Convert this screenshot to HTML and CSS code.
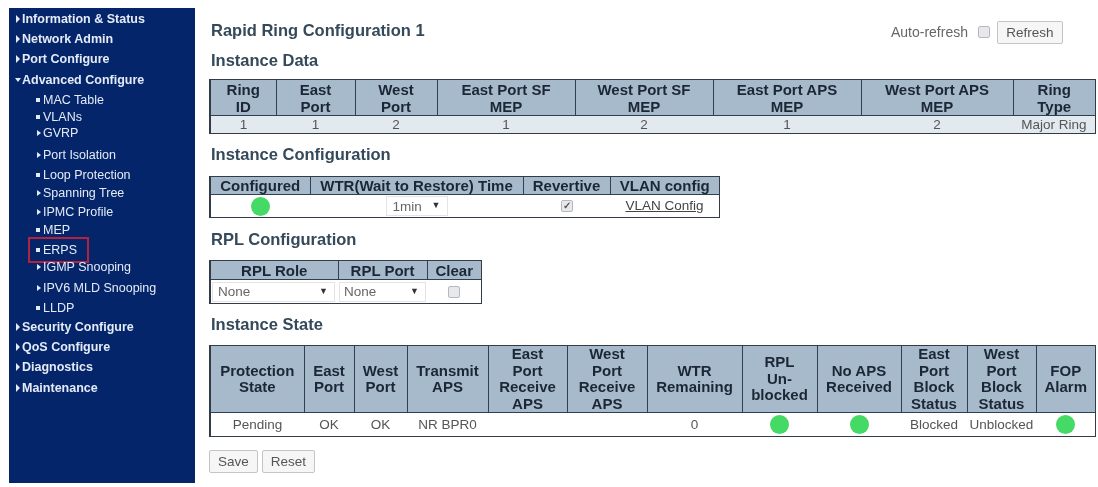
FILE: index.html
```html
<!DOCTYPE html>
<html lang="en">
<head>
<meta charset="utf-8">
<title>Rapid Ring Configuration 1</title>
<link rel="stylesheet" href="styles.css">
</head>
<body>
<div class="page">
  <nav class="sidebar">
    <ul class="menu">
      <li class="top"><i class="arrow"></i>Information &amp; Status</li>
      <li class="top"><i class="arrow"></i>Network Admin</li>
      <li class="top"><i class="arrow"></i>Port Configure</li>
      <li class="top"><i class="arrow down"></i>Advanced Configure</li>
      <li class="sub"><i class="dot"></i>MAC Table</li>
      <li class="sub"><i class="dot"></i>VLANs</li>
      <li class="sub"><i class="arrow small"></i>GVRP</li>
      <li class="sub"><i class="arrow small"></i>Port Isolation</li>
      <li class="sub"><i class="dot"></i>Loop Protection</li>
      <li class="sub"><i class="arrow small"></i>Spanning Tree</li>
      <li class="sub"><i class="arrow small"></i>IPMC Profile</li>
      <li class="sub"><i class="dot"></i>MEP</li>
      <li class="sub current"><i class="dot"></i>ERPS</li>
      <li class="sub"><i class="arrow small"></i>IGMP Snooping</li>
      <li class="sub"><i class="arrow small"></i>IPV6 MLD Snooping</li>
      <li class="sub"><i class="dot"></i>LLDP</li>
      <li class="top"><i class="arrow"></i>Security Configure</li>
      <li class="top"><i class="arrow"></i>QoS Configure</li>
      <li class="top"><i class="arrow"></i>Diagnostics</li>
      <li class="top"><i class="arrow"></i>Maintenance</li>
    </ul>
  </nav>
  <main class="main">
    <header class="titlebar">
      <h1>Rapid Ring Configuration 1</h1>
      <div class="refresh">
        <span>Auto-refresh</span>
        <input type="checkbox" class="check">
        <button type="button" class="btn btn-refresh">Refresh</button>
      </div>
    </header>

    <h2 class="h-data">Instance Data</h2>
    <table class="grid t-data">
      <colgroup><col class="d1"><col class="d2"><col class="d3"><col class="d4"><col class="d5"><col class="d6"><col class="d7"><col></colgroup>
      <thead>
        <tr class="head-two"><th>Ring<br>ID</th><th>East<br>Port</th><th>West<br>Port</th><th>East Port SF<br>MEP</th><th>West Port SF<br>MEP</th><th>East Port APS<br>MEP</th><th>West Port APS<br>MEP</th><th>Ring<br>Type</th></tr>
      </thead>
      <tbody>
        <tr class="tint"><td>1</td><td>1</td><td>2</td><td>1</td><td>2</td><td>1</td><td>2</td><td class="nowrap">Major Ring</td></tr>
      </tbody>
    </table>

    <h2 class="h-conf">Instance Configuration</h2>
    <table class="grid t-conf">
      <colgroup><col class="f1"><col class="f2"><col class="f3"><col></colgroup>
      <thead><tr><th>Configured</th><th>WTR(Wait to Restore) Time</th><th>Revertive</th><th>VLAN config</th></tr></thead>
      <tbody>
        <tr class="row-conf">
          <td><span class="led"></span></td>
          <td><span class="sel sel-wtr"><select><option>1min</option></select></span></td>
          <td><input type="checkbox" class="check" checked></td>
          <td><a href="#" class="link">VLAN Config</a></td>
        </tr>
      </tbody>
    </table>

    <h2 class="h-rpl">RPL Configuration</h2>
    <table class="grid t-rpl">
      <colgroup><col class="r1"><col class="r2"><col></colgroup>
      <thead><tr><th>RPL Role</th><th>RPL Port</th><th>Clear</th></tr></thead>
      <tbody>
        <tr class="row-rpl">
          <td class="flush"><span class="sel sel-role"><select><option>None</option></select></span></td>
          <td class="flush"><span class="sel sel-port"><select><option>None</option></select></span></td>
          <td><input type="checkbox" class="check"></td>
        </tr>
      </tbody>
    </table>

    <h2 class="h-state">Instance State</h2>
    <table class="grid t-state">
      <colgroup><col class="s1"><col class="s2"><col class="s3"><col class="s4"><col class="s5"><col class="s6"><col class="s7"><col class="s8"><col class="s9"><col class="s10"><col class="s11"><col></colgroup>
      <thead>
        <tr class="head-four"><th>Protection<br>State</th><th>East<br>Port</th><th>West<br>Port</th><th>Transmit<br>APS</th><th>East<br>Port<br>Receive<br>APS</th><th>West<br>Port<br>Receive<br>APS</th><th>WTR<br>Remaining</th><th>RPL<br>Un-<br>blocked</th><th>No APS<br>Received</th><th>East<br>Port<br>Block<br>Status</th><th>West<br>Port<br>Block<br>Status</th><th>FOP<br>Alarm</th></tr>
      </thead>
      <tbody>
        <tr class="row-state"><td>Pending</td><td>OK</td><td>OK</td><td class="nowrap">NR BPR0</td><td></td><td></td><td>0</td><td><span class="led"></span></td><td><span class="led"></span></td><td>Blocked</td><td>Unblocked</td><td><span class="led"></span></td></tr>
      </tbody>
    </table>

    <div class="actions">
      <button type="button" class="btn btn-save">Save</button>
      <button type="button" class="btn btn-reset">Reset</button>
    </div>
  </main>
</div>
</body>
</html>
```

FILE: styles.css
```css
* { box-sizing: border-box; }
html, body { margin: 0; padding: 0; background: #fff; }
body {
  width: 1098px;
  height: 487px;
  overflow: hidden;
  font-family: "Liberation Sans", Arial, sans-serif;
  font-size: 13.5px;
  color: #555;
}
.page {
  display: flex;
  align-items: flex-start;
  padding: 8px 2px 0 9px;
  filter: blur(0.6px);
}

/* Sidebar */
.sidebar {
  flex: 0 0 186px;
  height: 475px;
  background: #04256a;
  color: #e4ebf7;
}
.menu {
  list-style: none;
  margin: 0;
  padding: 1px 0 0;
  display: grid;
  grid-template-rows: 20px 20px 20px 22px 18px 16px 16px 28px 12px 24px 14px 22px 18px 16px 26px 14px 24px 16px 24px 18px;
}
.menu li {
  display: flex;
  align-items: center;
  white-space: nowrap;
  line-height: 12px;
  position: relative;
  font-size: 12.5px;
}
.top { padding-left: 7px; font-weight: 700; }
.sub { padding-left: 27px; }
.arrow {
  flex: none;
  width: 0;
  height: 0;
  margin-right: 2px;
  border-left: 4px solid #e4ebf7;
  border-top: 4px solid transparent;
  border-bottom: 4px solid transparent;
}
.arrow.small {
  margin-left: 1px;
  margin-right: 2px;
  border-top-width: 3px;
  border-bottom-width: 3px;
}
.arrow.down {
  margin-left: -1px;
  margin-right: 1px;
  border-left: 3px solid transparent;
  border-right: 3px solid transparent;
  border-top: 4px solid #e4ebf7;
  border-bottom: 0;
}
.dot {
  flex: none;
  width: 4px;
  height: 4px;
  margin: 0 3px 0 0;
  background: #e4ebf7;
}
.current::after {
  content: "";
  box-sizing: border-box;
  position: absolute;
  left: 19px;
  top: -4px;
  width: 61px;
  height: 26px;
  border: 2px solid #b3233f;
}

/* Main column */
.main {
  flex: 0 0 887px;
  margin-left: 14px;
}
.titlebar {
  display: flex;
  justify-content: space-between;
  align-items: flex-start;
  height: 37px;
  padding-top: 13px;
}
h1, h2 {
  margin: 0 0 0 2px;
  font-size: 16.5px;
  line-height: 18px;
  font-weight: 700;
  color: #34495a;
}
.refresh {
  display: flex;
  align-items: center;
  height: 22px;
  margin-right: 33px;
  font-size: 14px;
  color: #666;
}
.refresh .check { margin: 0 7px 0 10px; }
.check {
  appearance: none;
  display: inline-block;
  width: 12px;
  height: 12px;
  margin: 0;
  vertical-align: middle;
  background: #e6e8ea;
  border: 1px solid #b5b8bc;
  border-radius: 2px;
  position: relative;
}
.check:checked::after {
  content: "✓";
  position: absolute;
  inset: 0;
  font-size: 10px;
  line-height: 10px;
  font-weight: 700;
  text-align: center;
  color: #555;
}
.btn {
  height: 23px;
  padding: 0;
  font: 13.5px "Liberation Sans", Arial, sans-serif;
  color: #555;
  background: #f6f6f6;
  border: 1px solid #c4c4c4;
  border-radius: 2px;
}
.btn-refresh { width: 66px; }
.btn-save { width: 49px; }
.btn-reset { width: 53px; margin-left: 4px; }

.h-data { margin-top: 6px; }
.h-conf { margin-top: 11px; }
.h-rpl { margin-top: 12px; }
.h-state { margin-top: 11px; }

/* Tables */
.grid {
  table-layout: fixed;
  border-collapse: collapse;
  border: 1px solid #333c46;
  border-left-width: 2px;
  color: #555;
  font-size: 13.5px;
}
.grid th {
  padding: 0;
  font-size: 15px;
  font-weight: 700;
  text-align: center;
  color: #1c2735;
  background: #a7bacb;
  border-right: 1px solid #2f4050;
  border-bottom: 1px solid #2f4050;
  white-space: nowrap;
}
.grid th:last-child { border-right: 0; }
.grid td { padding: 0; text-align: center; line-height: 14px; }
.nowrap { white-space: nowrap; }
.tint td { background: #e2eaf0; height: 18px; }

.t-data { width: 887px; margin-top: 10px; }
.head-two th { height: 36px; line-height: 17px; }
.d1 { width: 66px; } .d2 { width: 79px; } .d3 { width: 82px; } .d4 { width: 138px; }
.d5 { width: 138px; } .d6 { width: 148px; } .d7 { width: 152px; }

.t-conf { width: 511px; margin-top: 13px; }
.t-conf th { height: 18px; line-height: 17px; }
.f1 { width: 100px; } .f2 { width: 213px; } .f3 { width: 87px; }
.row-conf td { height: 23px; }
.link { color: #444; text-decoration: underline; }

.t-rpl { width: 273px; margin-top: 12px; }
.t-rpl th { height: 19px; line-height: 17px; }
.r1 { width: 128px; } .r2 { width: 89px; }
.row-rpl td { height: 24px; }
.grid td.flush { padding-left: 1px; text-align: left; }

.t-state { width: 887px; margin-top: 12px; }
.head-four th { height: 67px; line-height: 16.5px; }
.s1 { width: 94px; } .s2 { width: 50px; } .s3 { width: 53px; } .s4 { width: 81px; }
.s5 { width: 79px; } .s6 { width: 80px; } .s7 { width: 95px; } .s8 { width: 75px; }
.s9 { width: 84px; } .s10 { width: 66px; } .s11 { width: 69px; }
.row-state td { height: 24px; }

.led {
  display: inline-block;
  width: 19px;
  height: 19px;
  vertical-align: middle;
  border-radius: 50%;
  background: #45d966;
}

/* Selects */
.sel { position: relative; display: inline-block; vertical-align: middle; }
.sel select {
  appearance: none;
  display: block;
  width: 100%;
  height: 100%;
  padding: 0 0 0 3px;
  font: 13.5px "Liberation Sans", Arial, sans-serif;
  color: #666;
  background: #fff;
  border: 1px solid #e4e4e4;
}
.sel::after {
  content: "▼";
  position: absolute;
  right: 7px;
  top: 5px;
  font-size: 9px;
  line-height: 9px;
  color: #333;
  pointer-events: none;
}
.sel-wtr { width: 62px; height: 20px; }
.sel-wtr select { padding-left: 6px; }
.sel-role { width: 123px; height: 20px; }
.sel-role select { padding-left: 5px; }
.sel-port { width: 87px; height: 20px; }
.sel-port select { padding-left: 4px; }

.actions { margin-top: 13px; display: flex; }
```
